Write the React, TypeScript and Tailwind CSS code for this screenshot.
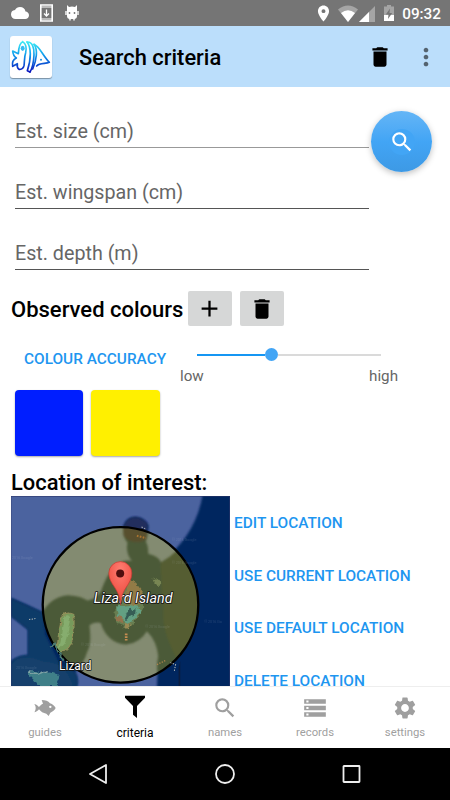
import type { ReactNode } from "react";
import { MdAdd, MdCloud, MdDelete, MdLocationOn, MdMoreVert, MdSearch, MdSettings, MdStorage } from "react-icons/md";

type Tab = {
  label: string;
  icon: ReactNode;
};

const fields = ["Est. size (cm)", "Est. wingspan (cm)", "Est. depth (m)"];

const locationActions = ["Edit location", "Use current location", "Use default location", "Delete location"];

const activeTab = "criteria";

const tabs: Tab[] = [
  { label: "guides", icon: <FishIcon /> },
  { label: "criteria", icon: <FunnelIcon /> },
  { label: "names", icon: <MdSearch size={26} /> },
  { label: "records", icon: <MdStorage size={26} /> },
  { label: "settings", icon: <MdSettings size={26} /> },
];

function FishIcon() {
  return (
    <svg width="22" height="18" viewBox="0 0 66 54" fill="currentColor">
      <path
        fillRule="evenodd"
        d="M1 15C8 16 12 21 15 24C18 20 22 16 27 14L23 3C34 3 43 6 48 13C56 16 62 21 65 27C62 34 56 38 49 41L44 51L37 44C28 43 20 38 15 31C12 35 8 38 1 40C4 35 5 31 5 27C5 23 4 20 1 15ZM49 20A3.5 3.5 0 1 0 49 27A3.5 3.5 0 1 0 49 20Z"
      />
    </svg>
  );
}

function FunnelIcon() {
  return (
    <svg width="22" height="24" viewBox="0 0 66 72" fill="currentColor">
      <path d="M3 2H63V8L39 33V69L27 59V33L3 8Z" />
    </svg>
  );
}

function AppLogo() {
  return (
    <svg width="42" height="42" viewBox="0 0 126 126" fill="none" strokeLinecap="round" strokeLinejoin="round">
      <defs>
        <linearGradient id="logo" x1="0" y1="15" x2="0" y2="108" gradientUnits="userSpaceOnUse">
          <stop offset="0" stopColor="#3ff0f5" />
          <stop offset="0.45" stopColor="#109cec" />
          <stop offset="1" stopColor="#0a12bd" />
        </linearGradient>
      </defs>
      <g stroke="url(#logo)" strokeWidth="5">
        <path d="M38 17C28 21 26 36 25 53L8 45C9 56 13 62 19 66C10 70 6 80 8 91L22 83C21 90 21 96 27 100C35 101 40 97 42 89C44 78 42 64 47 50C50 37 48 22 38 17" />
        <path d="M51 18C64 34 64 68 52 104L60 108" />
        <path d="M51 18C67 17 73 35 72 56C71 80 66 98 60 108" />
        <path d="M72 25C84 41 80 72 68 99" />
        <path d="M72 25C89 32 98 58 118 79C107 84 89 80 80 90" />
      </g>
      <ellipse cx="38" cy="37" rx="6" ry="8" fill="#35bdf2" />
      <circle cx="93" cy="71" r="3" fill="#168de0" />
    </svg>
  );
}

function StatusBar() {
  return (
    <div className="flex h-[26px] shrink-0 items-center bg-[#757575] pl-[11px] pr-[9px] text-white">
      <MdCloud size={18} />
      <svg className="ml-[11px]" width="13" height="18" viewBox="0 0 13 18" fill="none" stroke="white">
        <path d="M.8 1H12.2V17H.8Z" strokeWidth="1.6" />
        <path d="M1 3H12M1 15H12" />
        <path d="M6.5 5.5V12M4 9.5L6.5 12L9 9.5" strokeWidth="1.3" />
      </svg>
      <svg className="ml-[12px]" width="14" height="16" viewBox="0 0 14 16">
        <path d="M2 0L4 2Q7 1 10 2L12 0L12 4.2H2ZM2 5H12V11Q12 14 9 14H5Q2 14 2 11Z" fill="white" />
        <path d="M2 4H12V6H2Z" fill="white" />
        <path d="M1 6V10M13 6V10M5 13V15.5M9 13V15.5" stroke="white" strokeWidth="1.4" />
        <circle cx="4.5" cy="8" r=".9" fill="#757575" />
        <circle cx="9.5" cy="8" r=".9" fill="#757575" />
      </svg>
      <div className="grow" />
      <MdLocationOn size={19} />
      <svg className="ml-[5px]" width="20" height="17" viewBox="0 0 20 17">
        <path d="M0 4.5Q10-3.5 20 4.5L10 17Z" fill="#a5a5a5" />
        <path d="M3 8Q10 2.5 17 8L10 17Z" fill="white" />
      </svg>
      <svg className="ml-[1px]" width="16" height="17" viewBox="0 0 16 17">
        <path d="M16 1V17H0Z" fill="#a5a5a5" />
        <path d="M10 7V17H0Z" fill="white" />
      </svg>
      <svg className="ml-[8px]" width="12" height="18" viewBox="0 0 12 18">
        <path d="M1 2.5H4V1H8V2.5H11V17H1Z" fill="#a5a5a5" />
        <path d="M1 11H11V17H1Z" fill="white" />
        <path d="M7 4.5L2.8 10.5H5.5L5 15L9.2 9H6.5Z" fill="#757575" />
      </svg>
      <span className="ml-[7px] pt-[3px] text-[15.3px] font-medium leading-none">09:32</span>
    </div>
  );
}

function AppBar() {
  return (
    <div className="flex h-[61px] shrink-0 items-center bg-[#bbdefb] pl-[10px] pr-[10px]">
      <div className="size-[42px] rounded-[3px] bg-white shadow-[0_1px_1px_rgba(0,0,0,0.35)]">
        <AppLogo />
      </div>
      <h1 className="ml-[27px] grow pt-[3px] text-[21.9px] font-medium text-black">Search criteria</h1>
      <MdDelete size={26} className="text-black" />
      <MdMoreVert size={28} className="ml-[19px] text-[#54636f]" />
    </div>
  );
}

function ReefMap() {
  return (
    <svg className="h-[190px] w-[219px] shrink-0" viewBox="33 95 656 569" preserveAspectRatio="none">
      <defs>
        <radialGradient id="pin" cx="0.5" cy="0.2" r="0.8">
          <stop offset="0" stopColor="#ff7d72" />
          <stop offset="1" stopColor="#ea4335" />
        </radialGradient>
        <filter id="soft" x="-10%" y="-10%" width="120%" height="120%">
          <feGaussianBlur stdDeviation="2.5" />
        </filter>
        <filter id="reef" x="-10%" y="-10%" width="120%" height="120%" colorInterpolationFilters="sRGB">
          <feTurbulence type="fractalNoise" baseFrequency="0.07" numOctaves="2" seed="4" result="n" />
          <feDisplacementMap in="SourceGraphic" in2="n" scale="16" xChannelSelector="R" yChannelSelector="G" />
          <feGaussianBlur stdDeviation="1.5" />
        </filter>
      </defs>
      <rect x="33" y="95" width="656" height="569" fill="#4b639f" />

      {/* deep water */}
      <g filter="url(#soft)" fill="#06265f">
        <path d="M608 85H700V680H470L474 560L440 500Q420 535 378 540Q320 535 302 475L268 482Q275 540 262 560Q250 600 225 622Q240 650 225 680H33V590Q55 572 84 572V495Q55 470 33 455V400Q80 420 130 445Q150 395 205 392Q245 395 262 408Q300 400 310 360Q330 320 345 300Q375 285 395 290Q375 265 382 235Q365 215 370 185Q380 158 407 158Q437 162 444 185Q445 210 437 232Q445 245 444 268Q475 275 482 294Q590 210 608 85Z" />
      </g>
      <g filter="url(#soft)">
        <path d="M33 402L130 445L135 510L180 600L225 622Q240 650 225 680H33V590Q55 572 84 572V495L33 455Z" fill="#0f3a68" />
        <path d="M370 185Q380 158 407 158Q437 162 444 185L437 215Q405 232 373 210Z" fill="#202f5d" />
        <path d="M33 600Q60 560 130 590Q200 590 220 664H33Z" fill="#123f6c" />
      </g>
      <path d="M540 590V664H535V610Z" fill="#0a1c3f" />

      {/* search radius */}
      <circle cx="361" cy="421" r="233" fill="#838b71" />
      <clipPath id="radius">
        <circle cx="361" cy="421" r="233" />
      </clipPath>
      <g clipPath="url(#radius)">
        <g filter="url(#soft)">
          <path d="M700 210V680H500Q460 640 474 575Q470 530 440 500Q420 535 378 540Q320 535 302 475Q282 470 268 482Q275 540 262 560Q250 600 225 622L120 580V455Q150 395 205 392Q245 395 262 408Q300 400 310 360Q330 310 365 292Q385 285 395 290Q375 265 382 235Q365 215 370 185H444Q445 210 437 232Q445 245 444 268Q475 275 482 294Q535 265 560 220Z" fill="#4b5a37" />
          <path d="M560 220L610 230V600H540Q480 500 490 430Q480 330 482 294Q535 265 560 220Z" fill="#545d33" />
          <path d="M370 185H444L438 225Q400 245 370 215Z" fill="#594f2e" />
        </g>
        <g filter="url(#reef)">
          <path d="M187 452Q205 440 221 450Q224 490 218 525Q200 570 173 563Q158 553 173 535Q176 490 187 452Z" fill="#779a5b" stroke="#98915b" strokeWidth="3" />
          <path d="M192 456Q205 448 210 458Q205 500 198 525Q190 545 175 550Q190 510 192 456Z" fill="#86ad6e" />
          <path d="M385 345L404 355L430 390L432 425L414 460L384 490L355 480L340 448L353 420L365 375Z" fill="#697d50" />
          <path d="M348 425L410 420L422 440L386 480L353 455Z" fill="#63a083" />
          <path d="M385 345L404 355L427 385V415L402 425L370 410Z" fill="#927b46" />
          <path d="M384 438L392 430L400 440L410 432L408 446L398 456L388 452L380 466L374 460Z" fill="#365d55" />
          <path d="M348 451L371 460L365 477L351 466Z" fill="#92724c" />
          <path d="M370 478L392 480L382 492Z" fill="#9a8a55" />
          <path d="M457 342Q475 337 484 360Q465 375 457 342Z" fill="#788653" />
        </g>
        <path d="M378 507V530" stroke="#c58c52" strokeWidth="8" strokeDasharray="5 3" />
        <path d="M470 600L495 588" stroke="#ad824b" strokeWidth="4" strokeDasharray="4 4" />
        <path d="M410 214L437 221" stroke="#a8732f" strokeWidth="6" strokeDasharray="5 4" />
      </g>
      <circle cx="361" cy="421" r="233" fill="none" stroke="black" strokeWidth="7" />

      <path d="M84 622Q110 615 125 625Q165 612 180 640L170 664H112Q102 642 84 630Z" fill="#3f7f88" filter="url(#reef)" />
      <path d="M84 622L115 628L140 618" stroke="#7fa3a5" strokeWidth="4" fill="none" filter="url(#reef)" />
      <path d="M150 548L163 540L180 572L191 588" stroke="#4a7a72" strokeWidth="6" fill="none" filter="url(#reef)" />
      <path d="M87 465L106 462M424 188L438 194M510 594L526 600L522 620" stroke="#bcc0bd" strokeWidth="3" strokeDasharray="4 4" fill="none" />
      <g fill="#c8d0dd" opacity="0.16" fontSize="11" fontFamily="Roboto, sans-serif">
        <text x="36" y="284">2016 Google</text>
        <text x="515" y="231">© 2016 Google</text>
        <text x="515" y="298">© 2016 Google</text>
        <text x="435" y="490">© 2016 Google</text>
        <text x="243" y="545">© 2016 Google</text>
        <text x="612" y="476">© 2016 Go</text>
        <text x="48" y="612">2016 Google</text>
      </g>

      <g fill="white" stroke="#111" strokeWidth="5" paintOrder="stroke" strokeLinejoin="round" fontFamily="Roboto, sans-serif">
        <text x="281" y="414" fontSize="43" fontStyle="italic" textLength="236" lengthAdjust="spacingAndGlyphs">
          Lizard Island
        </text>
        <text x="177" y="615" fontSize="37" textLength="97" lengthAdjust="spacingAndGlyphs">
          Lizard
        </text>
      </g>

      <path
        d="M361 421C359 370 326 361 326 326A34.5 34.5 0 0 1 395 326C395 361 363 370 361 421Z"
        fill="url(#pin)"
        stroke="#bd3a32"
        strokeWidth="2"
      />
      <circle cx="360" cy="327" r="12" fill="#4f0e0e" />
      <path d="M33 664V96H688V664" fill="none" stroke="#2d3768" strokeWidth="2" />
    </svg>
  );
}

function ColourControls() {
  return (
    <>
      <div className="mt-[21px] flex h-[35px] items-center pl-[11px]">
        <h2 className="w-[177px] whitespace-nowrap pt-[2px] text-[22px] font-medium">Observed colours</h2>
        <button className="flex h-[35px] w-[44px] items-center justify-center rounded-[2px] bg-[#d6d7d7] pr-[1px]">
          <MdAdd size={27} />
        </button>
        <button className="ml-[8px] flex h-[35px] w-[44px] items-center justify-center rounded-[2px] bg-[#d6d7d7]">
          <MdDelete size={26} />
        </button>
      </div>
      <div className="flex h-[64px]">
        <button className="ml-[24px] h-[68px] w-[156px] whitespace-nowrap text-left text-[15.4px] font-medium text-[#1e96f0]">
          COLOUR ACCURACY
        </button>
        <div className="w-[218px] pt-[22px]">
          <div className="ml-[17px] flex h-[13px] w-[184px] items-center">
            <div className="h-[2px] w-[68px] bg-[#1596f3]" />
            <div className="size-[13px] rounded-full bg-[#42a5f5]" />
            <div className="h-[2px] grow bg-[#dadada]" />
          </div>
          <div className="mt-[5px] flex justify-between text-[15.2px] leading-[21px] text-[#666]">
            <span>low</span>
            <span>high</span>
          </div>
        </div>
      </div>
      <div className="flex h-[66px] gap-[8px] pl-[15px]">
        <div className="w-[68px] rounded-[4px] bg-[#001eff] shadow-[0_1px_2px_rgba(0,0,0,0.35)]" />
        <div className="w-[69px] rounded-[4px] bg-[#fff000] shadow-[0_1px_2px_rgba(0,0,0,0.35)]" />
      </div>
    </>
  );
}

export default function App() {
  return (
    <div className="flex h-[800px] w-[450px] flex-col overflow-hidden bg-white font-['Roboto',sans-serif] text-black">
      <StatusBar />
      <AppBar />

      <main className="min-h-0 grow overflow-hidden">
        <div className="flex">
          <div className="ml-[15px] w-[354px]">
            {fields.map((field) => (
              <div
                key={field}
                className="flex h-[61px] items-end border-b border-[#555] pb-[3px] text-[19.7px] leading-[25px] text-[#666] first:border-[#999]"
              >
                {field}
              </div>
            ))}
          </div>
          <button className="ml-[2px] mt-[24px] flex size-[61px] items-center justify-center rounded-full bg-linear-to-b from-[#64b5f6] via-[#42a5f5] to-[#3d99e5] text-white shadow-[0_2px_6px_rgba(0,0,0,0.25)]">
            <span className="flex size-[26px] items-center justify-center rounded-full bg-[#42a5f5]">
              <MdSearch size={26} />
            </span>
          </button>
        </div>

        <ColourControls />

        <h2 className="mt-[12px] h-[28px] pl-[11px] pt-[1px] text-[21.9px] font-medium leading-[28px]">Location of interest:</h2>
        <div className="flex pl-[11px]">
          <ReefMap />
          <div className="pl-[4px] pt-[1px]">
            {locationActions.map((action) => (
              <button
                key={action}
                className="flex h-[52.5px] items-center whitespace-nowrap pt-[1px] text-[15.4px] font-medium uppercase text-[#1e96f0]"
              >
                {action}
              </button>
            ))}
          </div>
        </div>
      </main>

      <nav className="flex h-[62px] shrink-0 border-t border-[#eee] bg-white">
        {tabs.map((tab) => (
          <div
            key={tab.label}
            className={
              tab.label === activeTab
                ? "flex w-[90px] flex-col items-center text-[12px] text-black"
                : "flex w-[90px] flex-col items-center text-[11.3px] text-[#9f9f9f]"
            }
          >
            <div className={tab.label === activeTab ? "flex h-[38px] items-center pt-[2px]" : "flex h-[42px] items-center"}>{tab.icon}</div>
            <span className={tab.label === activeTab ? "leading-[16px]" : "mt-[-4px] leading-[16px]"}>{tab.label}</span>
          </div>
        ))}
      </nav>

      {/* system navigation */}
      <div className="flex h-[52px] shrink-0 items-center justify-center gap-[106px] bg-black">
        <svg width="20" height="22" viewBox="0 0 20 22" fill="none" stroke="#eee" strokeWidth="1.8" strokeLinejoin="round">
          <path d="M17 2V20L1 11Z" />
        </svg>
        <svg width="20" height="20" viewBox="0 0 20 20" fill="none" stroke="#eee" strokeWidth="1.8">
          <circle cx="10" cy="10" r="9" />
        </svg>
        <svg width="20" height="20" viewBox="0 0 20 20" fill="none" stroke="#eee" strokeWidth="1.8">
          <rect x="2.5" y="2" width="16" height="16" rx="0.5" />
        </svg>
      </div>
    </div>
  );
}
